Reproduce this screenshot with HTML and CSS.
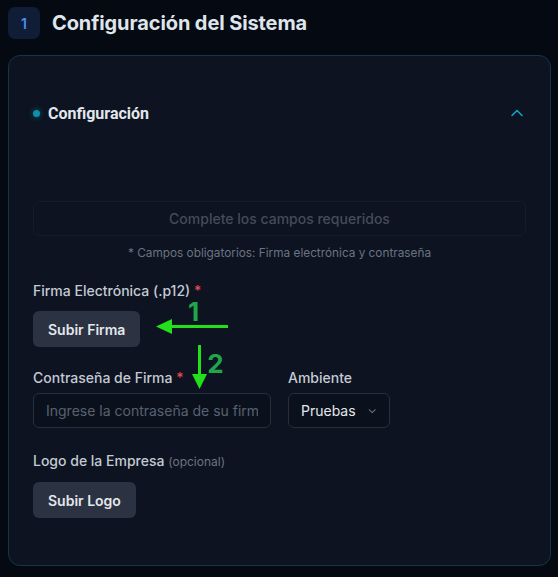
FILE: index.html
```html
<!DOCTYPE html>
<html lang="es">
<head>
<meta charset="utf-8">
<title>Configuración del Sistema</title>
<link rel="stylesheet" href="styles.css">
</head>
<body>
  <header class="page-head">
    <span class="step-badge">1</span>
    <h1 class="page-title">Configuración del Sistema</h1>
  </header>

  <section class="card">
    <div class="card-head">
      <div class="card-title">
        <span class="dot"></span>
        <h2>Configuración</h2>
      </div>
      <svg class="chev-up" width="14" height="14" viewBox="0 0 14 14" fill="none">
        <path d="M2 9.5 L7 4.5 L12 9.5" stroke="#0ea5c6" stroke-width="1.6" stroke-linecap="round" stroke-linejoin="round"/>
      </svg>
    </div>

    <div class="status-box">Complete los campos requeridos</div>
    <p class="note">* Campos obligatorios: Firma electrónica y contraseña</p>

    <div class="field field-cert">
      <label class="label">Firma Electrónica (.p12) <span class="req">*</span></label>
      <button class="btn">Subir Firma</button>
    </div>

    <div class="row">
      <div class="field">
        <label class="label">Contraseña de Firma <span class="req">*</span></label>
        <input class="input" type="password" placeholder="Ingrese la contraseña de su firma">
      </div>
      <div class="field">
        <label class="label">Ambiente</label>
        <div class="select">
          <span>Pruebas</span>
          <svg width="12" height="12" viewBox="0 0 12 12" fill="none">
            <path d="M2.5 4.5 L6 8 L9.5 4.5" stroke="#6b7280" stroke-width="1.2" stroke-linecap="round" stroke-linejoin="round"/>
          </svg>
        </div>
      </div>
    </div>

    <div class="field field-logo">
      <label class="label">Logo de la Empresa <span class="opt">(opcional)</span></label>
      <button class="btn">Subir Logo</button>
    </div>
  </section>

  <!-- hand-drawn step markers over the form -->
  <svg class="marks" width="558" height="577" viewBox="0 0 558 577">
    <g fill="#22e01a" stroke="#22e01a">
      <line x1="228" y1="326.5" x2="168" y2="326.5" stroke-width="3"/>
      <polygon points="156,326.5 172,319 172,334" stroke="none"/>
      <line x1="199.5" y1="345" x2="199.5" y2="378" stroke-width="3"/>
      <polygon points="199.5,389 192,374 207,374" stroke="none"/>
    </g>
    <text class="mark-num" x="193.5" y="321" text-anchor="middle">1</text>
    <text class="mark-num" x="215.5" y="373" text-anchor="middle">2</text>
  </svg>
</body>
</html>
```

FILE: styles.css
```css
* {
  box-sizing: border-box;
}

html, body {
  margin: 0;
  background: #050a12;
}

body {
  position: relative;
  width: 558px;
  height: 577px;
  padding: 7px 7px 0 8px;
  font-family: Inter, "Noto Sans", sans-serif;
  color: #cbd5e1;
  overflow: hidden;
}

.page-head {
  display: flex;
  align-items: center;
  gap: 12px;
  height: 32px;
}

.step-badge {
  width: 32px;
  height: 32px;
  border-radius: 7px;
  background: #0f1d36;
  color: #4b8ff0;
  font-size: 14px;
  font-weight: 600;
  display: flex;
  align-items: center;
  justify-content: center;
}

.page-title {
  margin: 0;
  font-size: 20px;
  font-weight: 700;
  color: #dfe5ec;
  letter-spacing: -0.1px;
}

.card {
  margin-top: 16px;
  height: 511px;
  border: 1px solid #123645;
  border-radius: 12px;
  background: #0d1320;
  padding: 45px 24px 0 24px;
}

.card-head {
  display: flex;
  align-items: center;
  justify-content: space-between;
  height: 24px;
  padding-right: 2px;
}

.card-title {
  display: flex;
  align-items: center;
  gap: 8px;
}

.dot {
  width: 7px;
  height: 7px;
  border-radius: 50%;
  background: #0a91ab;
  box-shadow: 0 0 6px rgba(14, 165, 198, 0.5);
}

.card-title h2 {
  margin: 0;
  font-family: Roboto, "Liberation Sans", sans-serif;
  font-size: 16px;
  font-weight: 700;
  color: #e2e7ee;
}

.chev-up {
  display: block;
}

.status-box {
  margin-top: 76px;
  height: 35px;
  border: 1px solid #151c29;
  border-radius: 6px;
  display: flex;
  align-items: center;
  justify-content: center;
  font-size: 14px;
  font-weight: 500;
  color: #444c5a;
}

.note {
  margin: 9px 0 0;
  text-align: center;
  font-size: 11.8px;
  line-height: 16px;
  color: #6b7382;
}

.field {
  display: flex;
  flex-direction: column;
  align-items: flex-start;
}

.field-cert {
  margin-top: 20px;
}

.label {
  font-size: 14px;
  font-weight: 500;
  line-height: 20px;
  color: #c4cad3;
}

.req {
  color: #e5484d;
}

.opt {
  font-size: 12px;
  font-weight: 400;
  color: #6b7382;
}

.field .btn {
  margin-top: 10px;
}

.btn {
  height: 36px;
  padding: 0 15px;
  border: none;
  border-radius: 6px;
  background: #2b3242;
  color: #e3e7ec;
  font-family: inherit;
  font-size: 14px;
  font-weight: 600;
}

.row {
  margin-top: 21px;
  display: flex;
  gap: 17px;
}

.input,
.select {
  margin-top: 5px;
  height: 35px;
  border: 1px solid #272e3c;
  border-radius: 6px;
  background: #0b111c;
  font-family: inherit;
  font-size: 14px;
}

.input {
  width: 238px;
  padding: 0 12px;
  color: #d5dae1;
}

.input::placeholder {
  color: #596170;
}

.select {
  width: 102px;
  display: flex;
  align-items: center;
  gap: 11px;
  padding: 0 12px;
  color: #e3e7ec;
}

.field-logo {
  margin-top: 23px;
}

.marks {
  position: absolute;
  left: 0;
  top: 0;
  pointer-events: none;
}

.mark-num {
  font-family: Inter, "Noto Sans", sans-serif;
  font-size: 26px;
  font-weight: 700;
  fill: #1fa84a;
}
```
